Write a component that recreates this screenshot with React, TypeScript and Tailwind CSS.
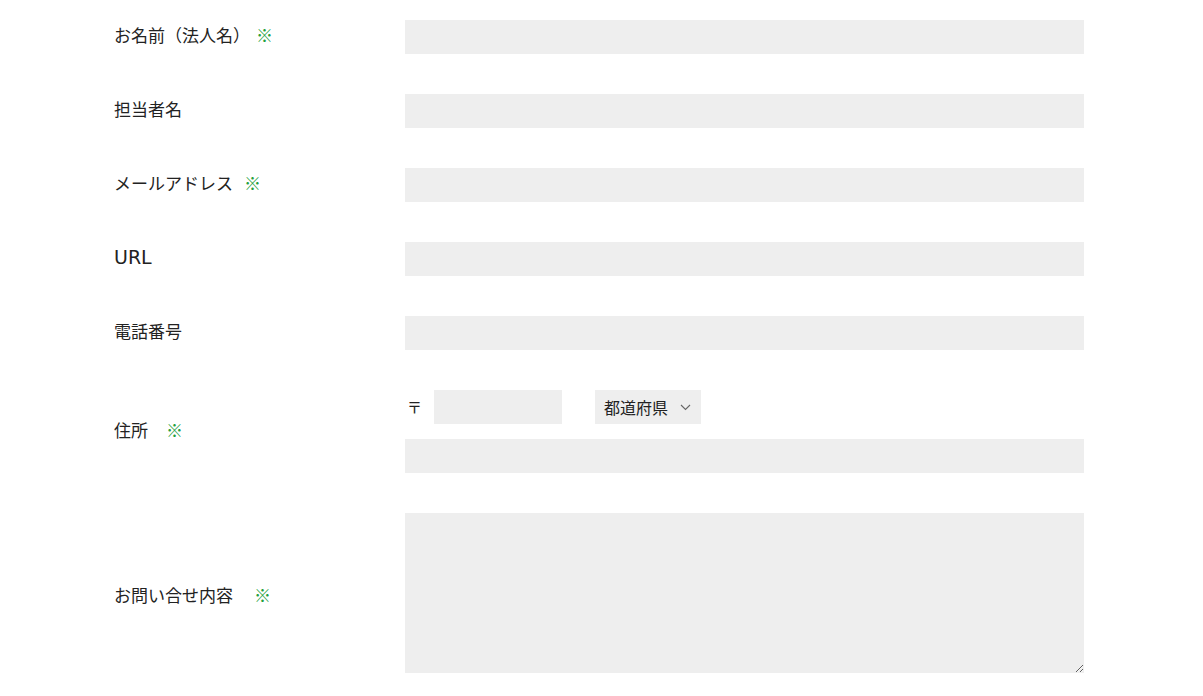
import React from 'react';

const font = { fontFamily: '"Noto Sans CJK JP", "Noto Sans", sans-serif' };

function Label({
  text,
  required,
  markCls = 'ml-[17px]',
  textCls = '',
  padCls = 'pb-[4px]',
}: {
  text: string;
  required?: boolean;
  markCls?: string;
  textCls?: string;
  padCls?: string;
}) {
  return (
    <div className={`w-[291px] shrink-0 ${padCls} text-[17px] text-[#222]`}>
      <span className={textCls}>{text}</span>
      {required && <span className={`${markCls} text-[#23a03c]`}>※</span>}
    </div>
  );
}

const inputCls = 'h-[34px] w-[679px] bg-[#eeeeee] border-0 outline-none px-2 text-[16px]';

export default function App() {
  const rows = [
    { label: 'お名前（法人名）', required: true, markCls: 'ml-[6px]' },
    { label: '担当者名' },
    { label: 'メールアドレス', required: true, markCls: 'ml-[11px]' },
    { label: 'URL', textCls: 'font-["DejaVu_Sans"] text-[19px] leading-[24px]' },
    { label: '電話番号' },
  ];

  return (
    <div className="min-h-[696px] bg-white pl-[114px] pt-[20px]" style={font}>
      <div className="flex flex-col gap-[40px]">
        {rows.map((row) => (
          <div key={row.label} className="flex items-center">
            <Label text={row.label} required={row.required} markCls={row.markCls} textCls={row.textCls} />
            <input type="text" className={inputCls} />
          </div>
        ))}

        <div className="flex items-center">
          <Label text="住所" required markCls="ml-[18px]" />
          <div className="flex flex-col gap-[15px]">
            <div className="flex items-center">
              <span className="w-[29px] pl-[2px] text-[15px] text-[#222]">〒</span>
              <input type="text" className="h-[34px] w-[128px] bg-[#eeeeee] border-0 outline-none" />
              <div className="ml-[33px] flex h-[34px] w-[106px] items-center bg-[#eeeeee] pl-[9px] text-[16px] text-[#222]">
                <span>都道府県</span>
                <svg className="ml-[12px]" width="11" height="7" viewBox="0 0 11 7" fill="none">
                  <path d="M1 1l4.5 4.5L10 1" stroke="#666" strokeWidth="1.1" />
                </svg>
              </div>
            </div>
            <input type="text" className={inputCls} />
          </div>
        </div>

        <div className="flex items-center">
          <Label text="お問い合せ内容" required markCls="ml-[21px]" padCls="pt-[4px]" />
          <textarea className="block h-[160px] w-[679px] bg-[#eeeeee] border-0 outline-none p-2 text-[16px]" />
        </div>
      </div>
    </div>
  );
}
